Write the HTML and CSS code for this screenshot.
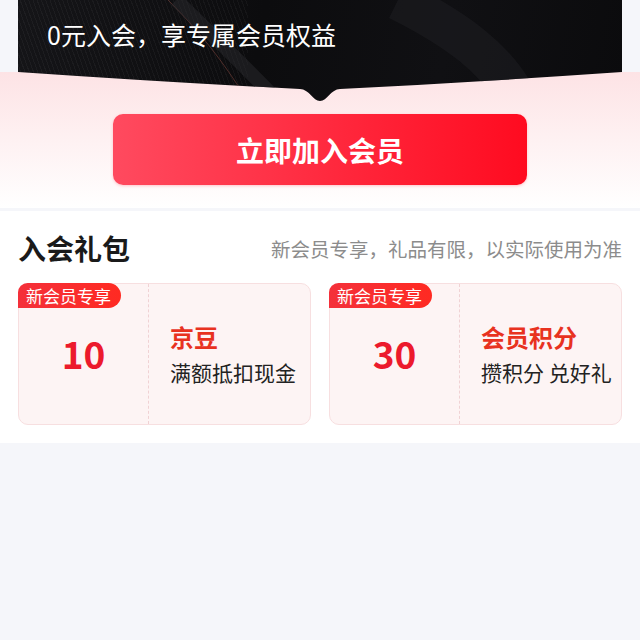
FILE: index.html
```html
<!DOCTYPE html>
<html lang="zh-CN">
<head>
  <meta charset="UTF-8">
  <meta name="viewport" content="width=device-width, initial-scale=1.0">
  <title>会员入会</title>
  <link rel="stylesheet" href="styles.css">
</head>
<body>
  <div class="hero">
    <div class="banner">
      <svg class="banner-lines" width="604" height="101" viewBox="0 0 604 101">
        <path d="M150 0 C 190 40, 210 70, 230 101" stroke="#6a3a34" stroke-width="1" fill="none" opacity="0.7"/>
        <path d="M158 0 C 200 40, 230 70, 260 101" stroke="#2a2a2e" stroke-width="14" fill="none" opacity="0.5"/>
        <path d="M380 0 C 440 30, 480 60, 500 101" stroke="#222226" stroke-width="40" fill="none" opacity="0.45"/>
      </svg>
      <p class="banner-text">0元入会，享专属会员权益</p>
    </div>
    <button class="join-btn">立即加入会员</button>
  </div>

  <div class="gift">
    <div class="gift-head">
      <h2>入会礼包</h2>
      <span class="gift-note">新会员专享，礼品有限，以实际使用为准</span>
    </div>
    <div class="gift-list">
      <div class="gift-card">
        <span class="badge">新会员专享</span>
        <div class="gift-num">10</div>
        <div class="gift-info">
          <div class="gift-title">京豆</div>
          <div class="gift-desc">满额抵扣现金</div>
        </div>
      </div>
      <div class="gift-card">
        <span class="badge">新会员专享</span>
        <div class="gift-num">30</div>
        <div class="gift-info">
          <div class="gift-title">会员积分</div>
          <div class="gift-desc">攒积分 兑好礼</div>
        </div>
      </div>
    </div>
  </div>
</body>
</html>
```

FILE: styles.css
```css
body {
  margin: 0;
  background: #f5f6fa;
  font-family: "Noto Sans CJK SC", "Noto Sans", sans-serif;
  color: #222;
}
.hero {
  height: 208px;
  background: linear-gradient(to bottom, #f5f6fa 0, #f5f6fa 72px, #fde3e5 72px, #fff 208px);
}
.banner {
  position: relative;
  margin: 0 18px;
  height: 101px;
  background: linear-gradient(100deg, #151518 0%, #0c0c0e 40%, #101013 70%, #0b0b0d 100%);
  clip-path: path("M0 0 H604 V72 Q 460 82 322 89 C 313 89 309 101 302 101 C 295 101 291 89 282 89 Q 144 82 0 72 Z");
  overflow: hidden;
}
.banner::before {
  content: "";
  position: absolute;
  left: 0;
  top: 0;
  width: 230px;
  height: 101px;
  background: repeating-linear-gradient(70deg, rgba(255,255,255,0.04) 0 1px, transparent 1px 4px);
}
.banner-lines {
  position: absolute;
  left: 0;
  top: 0;
}
.banner-text {
  position: relative;
  margin: 0;
  padding: 17px 0 0 29px;
  font-size: 25px;
  line-height: 34px;
  color: #fff;
}
.join-btn {
  display: block;
  margin: 13px auto 0;
  width: 414px;
  height: 71px;
  border: none;
  border-radius: 10px;
  background: linear-gradient(to right, #ff4a5f, #ff0b20);
  color: #fff;
  font-family: inherit;
  font-size: 28px;
  font-weight: 700;
  box-shadow: 0 1px 3px rgba(255, 40, 60, 0.25);
}
.gift {
  margin-top: 3px;
  background: #fff;
  padding: 20px 18px 18px;
}
.gift-head {
  display: flex;
  justify-content: space-between;
  align-items: center;
  height: 34px;
}
.gift-head h2 {
  margin: 0;
  font-size: 28px;
  font-weight: 700;
  color: #1a1a1a;
}
.gift-note {
  font-size: 19.5px;
  color: #8c8c8c;
}
.gift-list {
  display: grid;
  grid-template-columns: 1fr 1fr;
  gap: 18px;
  margin-top: 18px;
}
.gift-card {
  position: relative;
  display: flex;
  height: 142px;
  box-sizing: border-box;
  border: 1px solid #f7dfe0;
  border-radius: 10px;
  background: #fdf4f4;
}
.badge {
  position: absolute;
  left: -1px;
  top: -1px;
  height: 25px;
  padding: 0 10px 0 8px;
  line-height: 25px;
  font-size: 17px;
  color: #fff;
  background: linear-gradient(to right, #f4303a, #ff2a22);
  border-radius: 10px 13px 13px 0;
}
.gift-num {
  width: 129px;
  border-right: 1px dashed #f0d2d4;
  display: flex;
  align-items: center;
  justify-content: center;
  font-size: 37px;
  font-weight: 700;
  color: #ec1a2c;
  padding-bottom: 3px;
}
.gift-info {
  display: flex;
  flex-direction: column;
  justify-content: center;
  padding-left: 21px;
}
.gift-title {
  font-size: 24px;
  font-weight: 700;
  color: #e8321f;
  line-height: 32px;
}
.gift-desc {
  margin-top: 4px;
  font-size: 21px;
  color: #222;
  line-height: 30px;
}
```
